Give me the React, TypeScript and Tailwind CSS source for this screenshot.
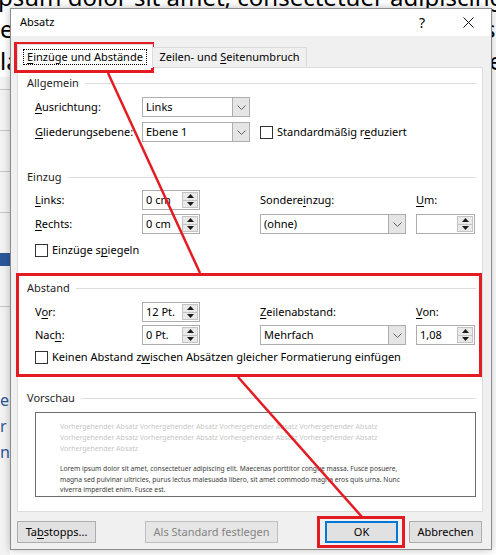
import React from 'react';

function U({ children }: { children: React.ReactNode }) {
  return <span className="underline decoration-1 underline-offset-[2px]">{children}</span>;
}

function Chevron() {
  return (
    <svg width="9" height="5" viewBox="0 0 9 5">
      <polyline points="0.5,0.5 4.5,4.5 8.5,0.5" fill="none" stroke="#606060" strokeWidth="1" />
    </svg>
  );
}

function Select({ value, width }: { value: string; width: string }) {
  return (
    <div className={`flex h-[20px] items-stretch border border-[#adadad] bg-white ${width}`}>
      <span className="flex flex-1 items-center pl-[3px]">{value}</span>
      <span className="flex w-[17px] items-center justify-center border-l border-[#adadad] bg-[#e5e5e5]">
        <Chevron />
      </span>
    </div>
  );
}

function Spinner({ value, width }: { value: string; width: string }) {
  return (
    <div className={`flex h-[20px] border border-[#adadad] bg-white ${width}`}>
      <span className="flex flex-1 items-center pl-[3px]">{value}</span>
      <span className="my-px mr-px flex w-[16px] flex-col border border-[#c4c4c4] bg-[#e9e9e9]">
        <span className="flex flex-1 items-center justify-center border-b border-[#c4c4c4]">
          <svg width="7" height="4" viewBox="0 0 7 4">
            <polygon points="0,4 3.5,0 7,4" fill="#1a1a1a" />
          </svg>
        </span>
        <span className="flex flex-1 items-center justify-center">
          <svg width="7" height="4" viewBox="0 0 7 4">
            <polygon points="0,0 3.5,4 7,0" fill="#1a1a1a" />
          </svg>
        </span>
      </span>
    </div>
  );
}

function Checkbox() {
  return <span className="h-[13px] w-[13px] shrink-0 border border-[#333333] bg-white" />;
}

function SectionHeader({ title }: { title: string }) {
  return (
    <div className="flex h-[16px] items-center">
      <span className="text-[#1e1e1e]">{title}</span>
      <div className="ml-[6px] h-px flex-1 bg-[#dcdcdc]" />
    </div>
  );
}

function Button({ children, className }: { children: React.ReactNode; className: string }) {
  return (
    <div className={`flex h-[22px] items-center justify-center border ${className}`}>{children}</div>
  );
}

function Background() {
  return (
    <div className="flex h-full flex-col">
      <div className="-mt-[19px] whitespace-nowrap font-['Noto_Sans',sans-serif] text-[24px] leading-[32px] text-black">
        <p className="-ml-[2px]">psum dolor sit amet, consectetuer adipiscing elit. Maecenas</p>
        <p>e, magna sed pulvinar ultricies, purus lectus malesuada libero, sit</p>
        <p>la et netus et malesuada fames ac turpis egestas.</p>
      </div>
      <div className="flex flex-1">
        <div className="flex w-[10px] flex-col bg-[#f3f3f3]">
          <div className="mt-[12px] h-px bg-[#c8c8c8]" />
          <div className="mt-[40px] h-px bg-[#c8c8c8]" />
          <div className="mt-[40px] h-px bg-[#c8c8c8]" />
          <div className="mt-[40px] h-px bg-[#c8c8c8]" />
          <div className="mt-[40px] h-[13px] bg-[#2b579a]" />
          <div className="mt-[40px] h-px bg-[#c8c8c8]" />
          <div className="mt-[80px] text-[16px] leading-[26px] text-[#2b579a]">
            <p>e</p>
            <p>r</p>
            <p>n</p>
          </div>
        </div>
        <div className="flex-1" />
      </div>
    </div>
  );
}

export default function App() {
  return (
    <div className="relative h-[555px] w-[496px] overflow-hidden whitespace-nowrap bg-white font-['Segoe_UI','Noto_Sans',sans-serif] text-[11px] text-black">
      <Background />

      {/* dialog window */}
      <div className="absolute left-[10px] top-[8px] flex h-[542px] w-[482px] flex-col border border-[#8c8c8c] bg-[#f0f0f0] shadow-[0_0_8px_rgba(0,0,0,0.25)]">
        <div className="flex h-[27px] items-center bg-white">
          <span className="flex-1 pl-[9px]">Absatz</span>
          <span className="flex w-[46px] justify-center text-[14px]">?</span>
          <span className="flex w-[46px] justify-center">
            <svg width="11" height="11" viewBox="0 0 11 11">
              <path d="M0.5 0.5 L10.5 10.5 M10.5 0.5 L0.5 10.5" stroke="#111" strokeWidth="1" />
            </svg>
          </span>
        </div>

        <div className="flex flex-1 flex-col pl-[6px] pr-[8px]">
          <div className="relative z-10 mt-[8px] flex h-[24px] items-end">
            <div className="flex h-[24px] w-[136px] items-center justify-center border border-b-0 border-[#dcdcdc] bg-white">
              <span className="border border-dotted border-black px-[3px] leading-[14px]">
                <U>E</U>inzüge und Abstände
              </span>
            </div>
            <div className="mb-px flex h-[20px] w-[154px] items-center justify-center border border-b-0 border-l-0 border-[#dcdcdc] bg-[#f0f0f0]">
              <span>
                Zeilen- und <U>S</U>eitenumbruch
              </span>
            </div>
          </div>

          <div className="-mt-px flex h-[445px] flex-col border border-[#dcdcdc] bg-white pl-[9px] pr-[6px] pt-[7px]">
            <SectionHeader title="Allgemein" />
            <div className="mt-[6px] flex h-[20px] items-center">
              <div className="w-[115px] pl-[8px]">
                <U>A</U>usrichtung:
              </div>
              <Select value="Links" width="w-[108px]" />
            </div>
            <div className="mt-[5px] flex h-[20px] items-center">
              <div className="w-[115px] pl-[8px]">
                <U>G</U>liederungsebene:
              </div>
              <Select value="Ebene 1" width="w-[108px]" />
              <div className="ml-[10px] flex items-center gap-[4px]">
                <Checkbox />
                <span>
                  Standardmäßig r<U>e</U>duziert
                </span>
              </div>
            </div>

            <div className="mt-[27px]">
              <SectionHeader title="Einzug" />
            </div>
            <div className="mt-[5px] flex h-[20px] items-center">
              <div className="w-[115px] pl-[8px]">
                <U>L</U>inks:
              </div>
              <Spinner value="0 cm" width="w-[58px]" />
              <div className="ml-[60px] w-[156px]">
                Sondere<U>i</U>nzug:
              </div>
              <div>
                <U>U</U>m:
              </div>
            </div>
            <div className="mt-[4px] flex h-[20px] items-center">
              <div className="w-[115px] pl-[8px]">
                <U>R</U>echts:
              </div>
              <Spinner value="0 cm" width="w-[58px]" />
              <div className="ml-[60px]">
                <Select value="(ohne)" width="w-[146px]" />
              </div>
              <div className="ml-[10px]">
                <Spinner value="" width="w-[59px]" />
              </div>
            </div>
            <div className="mt-[10px] flex h-[13px] items-center gap-[4px] pl-[8px]">
              <Checkbox />
              <span>
                Einzüge s<U>p</U>iegeln
              </span>
            </div>

            <div className="mt-[23px]">
              <SectionHeader title="Abstand" />
            </div>
            <div className="mt-[6px] flex h-[20px] items-center">
              <div className="w-[115px] pl-[8px]">
                V<U>o</U>r:
              </div>
              <Spinner value="12 Pt." width="w-[58px]" />
              <div className="ml-[60px] w-[156px]">
                <U>Z</U>eilenabstand:
              </div>
              <div>
                <U>V</U>on:
              </div>
            </div>
            <div className="mt-[3px] flex h-[20px] items-center">
              <div className="w-[115px] pl-[8px]">
                Nac<U>h</U>:
              </div>
              <Spinner value="0 Pt." width="w-[58px]" />
              <div className="ml-[60px]">
                <Select value="Mehrfach" width="w-[146px]" />
              </div>
              <div className="ml-[10px]">
                <Spinner value="1,08" width="w-[59px]" />
              </div>
            </div>
            <div className="mt-[6px] flex h-[13px] items-center gap-[4px] pl-[8px]">
              <Checkbox />
              <span>
                Keinen Abstand z<U>w</U>ischen Absätzen gleicher Formatierung einfügen
              </span>
            </div>

            <div className="mt-[26px]">
              <SectionHeader title="Vorschau" />
            </div>
            <div className="ml-[8px] mt-[6px] h-[85px] overflow-hidden border border-[#6e6e6e] bg-white pl-[24px] pt-[8px] font-['Noto_Sans',sans-serif] text-[7px] leading-[11px]">
              <div className="text-[#c6c6c6]">
                <p>Vorhergehender Absatz Vorhergehender Absatz Vorhergehender Absatz Vorhergehender Absatz</p>
                <p>Vorhergehender Absatz Vorhergehender Absatz Vorhergehender Absatz Vorhergehender Absatz</p>
                <p>Vorhergehender Absatz</p>
              </div>
              <div className="mt-[10px] text-[6.7px] leading-[10.5px] text-[#3c3c3c]">
                <p>Lorem ipsum dolor sit amet, consectetuer adipiscing elit. Maecenas porttitor congue massa. Fusce posuere,</p>
                <p>magna sed pulvinar ultricies, purus lectus malesuada libero, sit amet commodo magna eros quis urna. Nunc</p>
                <p>viverra imperdiet enim. Fusce est.</p>
              </div>
            </div>
          </div>

          <div className="mt-[9px] flex">
            <Button className="w-[79px] border-[#adadad] bg-[#e1e1e1]">
              <span>
                Ta<U>b</U>stopps...
              </span>
            </Button>
            <Button className="ml-[49px] w-[133px] border-[#bfbfbf] bg-[#e6e6e6] text-[#838383]">
              <span>Als Standard festlegen</span>
            </Button>
            <Button className="ml-[47px] w-[73px] border-2 border-[#0078d7] bg-[#e1e1e1]">
              <span>OK</span>
            </Button>
            <Button className="ml-[11px] w-[73px] border-[#adadad] bg-[#e1e1e1]">
              <span>Abbrechen</span>
            </Button>
          </div>
        </div>
      </div>

      {/* red annotation overlay */}
      <svg className="pointer-events-none absolute inset-0" width="496" height="555" viewBox="0 0 496 555">
        <g fill="none" stroke="#e31b23">
          <rect x="15.5" y="43.5" width="137" height="28" strokeWidth="3" />
          <rect x="17.5" y="274.5" width="463" height="101" strokeWidth="3" />
          <rect x="318.5" y="517.5" width="85" height="29" strokeWidth="3" />
          <line x1="108" y1="73" x2="200" y2="273" strokeWidth="2.5" />
          <line x1="238" y1="377" x2="362" y2="517" strokeWidth="2.5" />
        </g>
      </svg>
    </div>
  );
}
